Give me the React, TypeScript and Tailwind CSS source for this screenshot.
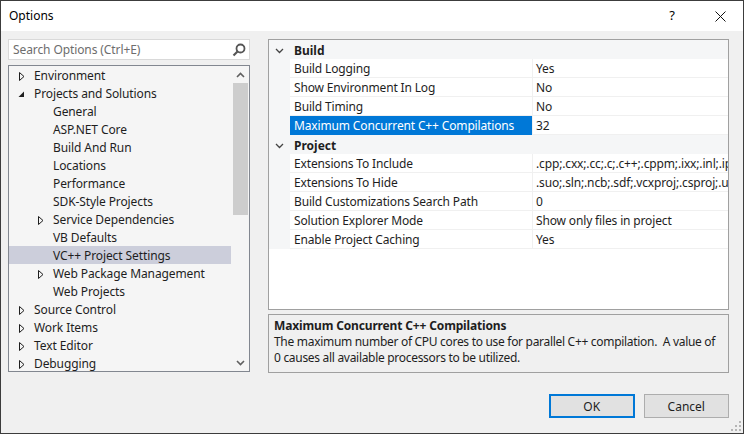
import React from "react";

const FONT = "font-['Segoe_UI','Noto_Sans',sans-serif]";

type TreeItem = { label: string; level: 0 | 1; arrow?: "closed" | "open"; selected?: boolean };

const TREE: TreeItem[] = [
  { label: "Environment", level: 0, arrow: "closed" },
  { label: "Projects and Solutions", level: 0, arrow: "open" },
  { label: "General", level: 1 },
  { label: "ASP.NET Core", level: 1 },
  { label: "Build And Run", level: 1 },
  { label: "Locations", level: 1 },
  { label: "Performance", level: 1 },
  { label: "SDK-Style Projects", level: 1 },
  { label: "Service Dependencies", level: 1, arrow: "closed" },
  { label: "VB Defaults", level: 1 },
  { label: "VC++ Project Settings", level: 1, selected: true },
  { label: "Web Package Management", level: 1, arrow: "closed" },
  { label: "Web Projects", level: 1 },
  { label: "Source Control", level: 0, arrow: "closed" },
  { label: "Work Items", level: 0, arrow: "closed" },
  { label: "Text Editor", level: 0, arrow: "closed" },
  { label: "Debugging", level: 0, arrow: "closed" },
];

type GridRow =
  | { kind: "cat"; label: string }
  | { kind: "prop"; name: string; value: string; selected?: boolean };

const GRID: GridRow[] = [
  { kind: "cat", label: "Build" },
  { kind: "prop", name: "Build Logging", value: "Yes" },
  { kind: "prop", name: "Show Environment In Log", value: "No" },
  { kind: "prop", name: "Build Timing", value: "No" },
  { kind: "prop", name: "Maximum Concurrent C++ Compilations", value: "32", selected: true },
  { kind: "cat", label: "Project" },
  { kind: "prop", name: "Extensions To Include", value: ".cpp;.cxx;.cc;.c;.c++;.cppm;.ixx;.inl;.ipp;.h;.hh;.hpp" },
  { kind: "prop", name: "Extensions To Hide", value: ".suo;.sln;.ncb;.sdf;.vcxproj;.csproj;.user;.vbproj" },
  { kind: "prop", name: "Build Customizations Search Path", value: "0" },
  { kind: "prop", name: "Solution Explorer Mode", value: "Show only files in project" },
  { kind: "prop", name: "Enable Project Caching", value: "Yes" },
];

function TreeArrow({ open }: { open: boolean }) {
  return open ? (
    <svg width="7" height="7" viewBox="0 0 7 7" className="block">
      <polygon points="6,0.5 6,6 0.5,6" fill="#1e1e1e" />
    </svg>
  ) : (
    <svg width="6" height="9" viewBox="0 0 6 9" className="block">
      <polygon points="0.5,0.5 5,4.5 0.5,8.5" fill="none" stroke="#1e1e1e" strokeWidth="1" />
    </svg>
  );
}

function Chevron({ up }: { up: boolean }) {
  return (
    <svg width="9" height="6" viewBox="0 0 9 6" className="block">
      <polyline
        points={up ? "1,5 4.5,1.5 8,5" : "1,1 4.5,4.5 8,1"}
        fill="none"
        stroke="#606060"
        strokeWidth="1.6"
      />
    </svg>
  );
}

function OptionsTree() {
  return (
    <div className="relative h-[307px] border border-[#828790] bg-[#f5f5f5]">
      <div>
        {TREE.map((item) => (
          <div
            key={item.label}
            className={`flex h-[18px] w-[222px] items-center pt-[2px] ${item.selected ? "bg-[#cccedb]" : ""}`}
          >
            <div className={`flex w-[25px] shrink-0 items-center justify-center ${item.level === 1 ? "ml-[19px]" : ""}`}>
              {item.arrow && <TreeArrow open={item.arrow === "open"} />}
            </div>
            <span className="whitespace-nowrap text-[12px] tracking-[-0.1px] text-[#1e1e1e]">{item.label}</span>
          </div>
        ))}
      </div>
      <div className="absolute right-0 top-0 flex h-full w-[17px] flex-col bg-[#f5f5f5]">
        <div className="flex h-[17px] items-center justify-center">
          <Chevron up />
        </div>
        <div className="ml-[1px] h-[132px] w-[15px] bg-[#cdcdcd]" />
        <div className="flex-1" />
        <div className="flex h-[17px] items-center justify-center">
          <Chevron up={false} />
        </div>
      </div>
    </div>
  );
}

function PropertyGrid() {
  return (
    <div className="h-[271px] overflow-hidden border border-[#a0a0a0] bg-white">
      {GRID.map((row, i) =>
        row.kind === "cat" ? (
          <div key={i} className="flex h-[19px] items-center bg-[#f5f6f7] pt-[2px]">
            <div className="flex w-[21px] shrink-0 items-center justify-center">
              <svg width="9" height="6" viewBox="0 0 9 6" className="block">
                <polyline points="1,1 4.5,4.5 8,1" fill="none" stroke="#444" strokeWidth="1.3" />
              </svg>
            </div>
            <span className="pl-[4px] text-[12px] font-bold text-[#1e1e1e]">{row.label}</span>
          </div>
        ) : (
          <div key={i} className="flex h-[19px]">
            <div className="w-[21px] shrink-0 bg-[#f5f6f7]" />
            <div
              className={`flex w-[242px] shrink-0 items-center border-b pl-[4px] pt-[2px] ${
                row.selected ? "border-[#0078d7] bg-[#0078d7] text-white" : "border-[#f0f0f0] text-[#1e1e1e]"
              }`}
            >
              <span className="whitespace-nowrap text-[12px] tracking-[-0.15px]">{row.name}</span>
            </div>
            <div className="flex flex-1 items-center overflow-hidden border-b border-l border-[#f0f0f0] pl-[3px] pt-[2px]">
              <span className="whitespace-nowrap text-[12px] tracking-[-0.15px] text-[#1e1e1e]">{row.value}</span>
            </div>
          </div>
        )
      )}
    </div>
  );
}

export default function App() {
  return (
    <div className={`${FONT} flex h-[434px] w-[744px] flex-col overflow-hidden border border-[#3c3c3c] bg-[#f0f0f0]`}>
      <div className="flex h-[30px] shrink-0 items-center bg-white pl-[8px]">
        <span className="text-[12px] text-black">Options</span>
        <div className="flex-1" />
        <span className="mr-[40px] text-[13px] text-black">?</span>
        <svg width="11" height="11" viewBox="0 0 11 11" className="mr-[17px] block">
          <path d="M0.5 0.5 L10.5 10.5 M10.5 0.5 L0.5 10.5" stroke="#111" strokeWidth="1" />
        </svg>
      </div>

      <div className="flex flex-1 pt-[8px]">
        <div className="ml-[7px] flex w-[242px] shrink-0 flex-col">
          <div className="flex h-[21px] items-center border border-[#d9d9d9] bg-white pl-[4px] pr-[3px] pt-[1px]">
            <span className="flex-1 text-[12px] tracking-[-0.1px] text-[#6d6d6d]">Search Options (Ctrl+E)</span>
            <svg width="14" height="14" viewBox="0 0 14 14" className="block">
              <circle cx="8.5" cy="5.5" r="4" fill="none" stroke="#555" strokeWidth="1.8" />
              <line x1="5.5" y1="8.5" x2="1.5" y2="12.5" stroke="#555" strokeWidth="2.2" />
            </svg>
          </div>
          <div className="mt-[5px]">
            <OptionsTree />
          </div>
        </div>

        <div className="ml-[18px] flex w-[461px] shrink-0 flex-col">
          <PropertyGrid />
          <div className="mt-[4px] h-[59px] border border-[#a0a0a0] bg-[#f0f0f0] px-[5px] pt-[3px] text-[12px] leading-[16px] text-[#1e1e1e]">
            <div className="font-bold tracking-[-0.15px]">Maximum Concurrent C++ Compilations</div>
            <div className="whitespace-nowrap tracking-[-0.3px]">
              The maximum number of CPU cores to use for parallel C++ compilation.&nbsp; A value of
              <br />0 causes all available processors to be utilized.
            </div>
          </div>
          <div className="mt-[21px] flex gap-[9px] pl-[281px]">
            <button className="h-[24px] w-[86px] border-2 border-[#0078d7] bg-[#e1e1e1] pt-[1px] text-[12px] text-[#1e1e1e]">
              OK
            </button>
            <button className="h-[24px] w-[86px] border border-[#adadad] bg-[#e1e1e1] pt-[1px] text-[12px] text-[#1e1e1e]">
              Cancel
            </button>
          </div>
        </div>
      </div>
      <div className="relative h-0">
        <svg width="10" height="10" viewBox="0 0 10 10" className="absolute bottom-[2px] right-[2px] block">
          <g fill="#b5b5b5">
            <rect x="8" y="0" width="2" height="2" />
            <rect x="4" y="4" width="2" height="2" />
            <rect x="8" y="4" width="2" height="2" />
            <rect x="0" y="8" width="2" height="2" />
            <rect x="4" y="8" width="2" height="2" />
            <rect x="8" y="8" width="2" height="2" />
          </g>
        </svg>
      </div>
    </div>
  );
}
